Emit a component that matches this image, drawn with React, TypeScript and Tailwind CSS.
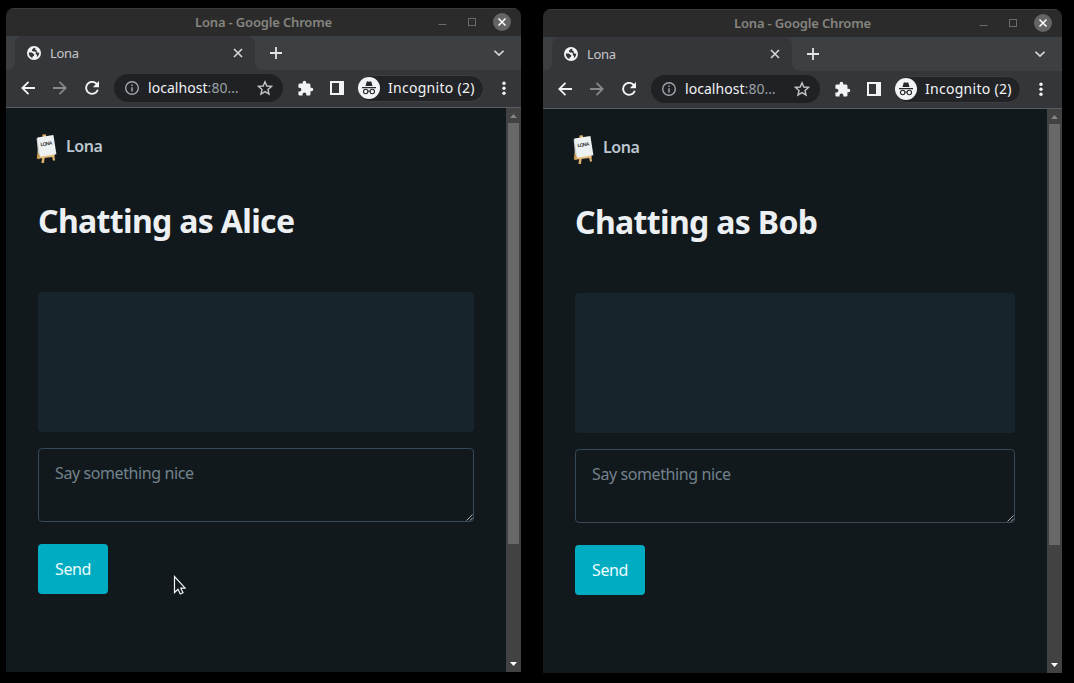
import React from "react";

function GlobeIcon() {
  return (
    <svg width="14" height="14" viewBox="0 0 14 14">
      <circle cx="7" cy="7" r="7" fill="#f1f3f4" />
      <path d="M8.6 1.9 L7.2 1.8 L5.2 3.2 L4.9 4.6 L6 5.6 L8 5.6 L8.9 6.6 L8.7 8 L10 8.9 L9.8 11.3 C11.4 10.3 12.3 8.7 12.200 6.6 L10.6 6.8 L9.600 5.6 L9.8 4.2 L8 3.6Z" fill="#35363a" />
      <path d="M1.8 6.4 L4.8 6.5 L6.4 7.8 L7.4 8.6 L6.8 10 L5.600 10.5 L5.4 12 C3.2 11.2 1.700 9.200 1.800 6.400Z" fill="#35363a" />
    </svg>
  );
}

function LogoIcon() {
  return (
    <svg width="22" height="30" viewBox="0 0 22 30">
      <path d="M3 5 L.8 24.5 L3.4 25.2 L6 20Z" fill="#c79a56" />
      <path d="M6.600 21 L5.400 29 L8 29 L9 21Z M15.500 20.500 L17 26.800 L19.200 26.200 L17.800 20Z" fill="#ddb06b" />
      <path d="M6.400 .6 L9.800 .2 L10.400 3 L6.600 3.400Z" fill="#ddb06b" />
      <path d="M3.600 21.800 L18.500 20 L18.700 22.800 L3.800 24.400Z" fill="#e3bb7d" />
      <path d="M.6 4.400 L3 3.400 L4.200 22 L2 18.500Z" fill="#c9cccc" />
      <path d="M1.400 3.400 L17.400 .9 L20.400 20.200 L4 22.800Z" fill="#eef1f1" />
      <text x="4.700" y="12.300" transform="rotate(-9 4.7 12.3)" textLength="12" fontSize="5" fontWeight="700" fontFamily="Liberation Sans, sans-serif" fill="#33383a">LONA</text>
    </svg>
  );
}

function TitleBar() {
  return (
    <div className="relative flex h-7 items-center justify-center border-t border-[#3a3a3a] bg-[#2b2b2b]">
      <span className="-mt-[2px] text-[13px] font-semibold leading-4 tracking-[-0.17px] text-[#86857f]">Lona - Google Chrome</span>
      <div className="absolute right-[10px] top-[4px] flex items-center gap-[17px]">
        <svg width="13" height="18" viewBox="0 0 13 18" className="mr-[3px]">
          <path d="M1.500 11.500 H9.500" stroke="#696969" />
        </svg>
        <svg width="9" height="18" viewBox="0 0 9 18" className="-ml-[3px]">
          <rect x="1.500" y="5.500" width="7" height="7" fill="none" stroke="#696969" />
        </svg>
        <svg width="18" height="18" viewBox="0 0 18 18">
          <circle cx="9" cy="9" r="9" fill="#656565" />
          <path d="M5.500 5.500 L12.500 12.500 M12.500 5.500 L5.500 12.500" stroke="#fff" strokeWidth="1.500" />
        </svg>
      </div>
    </div>
  );
}

function TabStrip() {
  return (
    <div className="flex h-[34px] items-end bg-[#3c4043]">
      <div className="h-full w-[9px] bg-[#35363a]">
        <div className="h-full rounded-br-lg bg-[#3c4043]" />
      </div>
      <div className="flex h-full w-60 items-center rounded-t-lg bg-[#35363a] pl-3">
        <GlobeIcon />
        <span className="ml-[9px] text-[13px] leading-4 tracking-[-0.3px] text-[#c5c8ca]">Lona</span>
        <svg width="10" height="10" viewBox="0 0 10 10" className="ml-auto mr-3">
          <path d="M1 1 L9 9 M9 1 L1 9" stroke="#d5d7d9" strokeWidth="1.600" />
        </svg>
      </div>
      <div className="h-full w-2 bg-[#35363a]">
        <div className="h-full rounded-bl-lg bg-[#3c4043]" />
      </div>
      <svg width="12" height="34" viewBox="0 0 12 34" className="ml-[7px]">
        <path d="M6 11 V23 M0 17 H12" stroke="#e3e5e7" strokeWidth="1.800" />
      </svg>
      <svg width="10" height="34" viewBox="0 0 10 34" className="ml-auto mr-[17px]">
        <path d="M.5 14.800 L5 19 L9.500 14.800" fill="none" stroke="#d5d7d9" strokeWidth="1.700" />
      </svg>
    </div>
  );
}

function Toolbar() {
  return (
    <div className="flex h-[38px] items-center border-b border-[#5a5d60] bg-[#35363a] pb-px">
      <svg width="14" height="14" viewBox="0 0 14 14" className="ml-[15px]" fill="none" stroke="#f1f3f4" strokeWidth="1.800">
        <path d="M14 7 H1.500 M7.500 .8 L1.300 7 L7.500 13.200" />
      </svg>
      <svg width="14" height="14" viewBox="0 0 14 14" className="ml-[18px]" fill="none" stroke="#85888b" strokeWidth="1.800">
        <path d="M0 7 H12.500 M6.500 .8 L12.700 7 L6.500 13.200" />
      </svg>
      <svg width="14" height="14" viewBox="0 0 14 14" className="ml-[18px]">
        <path d="M11.900 3.200 A6 6 0 1 0 12.800 8.800" fill="none" stroke="#f1f3f4" strokeWidth="1.900" />
        <path d="M14 0 V6.200 H7.800Z" fill="#f1f3f4" />
      </svg>
      <div className="ml-[15px] flex h-[28px] w-[169px] items-center rounded-full bg-[#202124] pl-[11px]">
        <svg width="14" height="14" viewBox="0 0 14 14">
          <circle cx="7" cy="7" r="6.300" fill="none" stroke="#a1a4a8" strokeWidth="1.400" />
          <path d="M7 6.200 V10.500 M7 3.500 V5" stroke="#a1a4a8" strokeWidth="1.500" />
        </svg>
        <span className="ml-[9px] w-[92px] whitespace-nowrap text-[14px] leading-5 tracking-[0.05px] text-[#9aa0a6]">
          <span className="text-[#f1f3f4]">localhost</span>:80…
        </span>
        <svg width="16" height="16" viewBox="0 0 16 16" className="ml-[17px]">
          <path d="M8 1.800 L9.800 6 L14.500 6.400 L11 9.500 L12 14 L8 11.600 L4 14 L5 9.500 L1.500 6.400 L6.200 6Z" fill="none" stroke="#c4c7ca" strokeWidth="1.400" />
        </svg>
      </div>
      <svg width="17" height="17" viewBox="0 0 24 24" className="ml-[14px]" fill="#f1f3f4">
        <path d="M20.500 11H19V7c0-1.100-.9-2-2-2h-4V3.500a2.500 2.500 0 0 0-5 0V5H4c-1.100 0-2 .9-2 2v3.800h1.500a2.700 2.700 0 0 1 0 5.400H2V20c0 1.100.9 2 2 2h3.800v-1.500a2.700 2.700 0 0 1 5.400 0V22H17c1.100 0 2-.9 2-2v-4h1.500a2.500 2.500 0 0 0 0-5z" />
      </svg>
      <svg width="14" height="14" viewBox="0 0 14 14" className="ml-[16px]">
        <path d="M0 0 H14 V14 H0Z M2 2 V12 H9 V2Z" fill="#f1f3f4" fillRule="evenodd" />
      </svg>
      <div className="ml-[13px] flex h-[27px] w-[127px] items-center rounded-full border border-[#3d3e41] bg-[#222326]">
        <svg width="22" height="22" viewBox="0 0 22 22" className="shrink-0">
          <circle cx="11" cy="11" r="11" fill="#f1f3f4" />
          <path d="M7.500 9 L8.600 5 Q8.900 4.100 9.800 4.400 L11 4.700 L12.200 4.400 Q13.100 4.100 13.400 5 L14.500 9Z M4 10.100 H18 V11.300 H4Z" fill="#26272a" />
          <circle cx="7.700" cy="14.500" r="2.200" fill="none" stroke="#26272a" strokeWidth="1.100" />
          <circle cx="14.300" cy="14.500" r="2.200" fill="none" stroke="#26272a" strokeWidth="1.100" />
          <path d="M9.900 14.300 Q11 13.500 12.100 14.300" fill="none" stroke="#26272a" />
        </svg>
        <span className="ml-2 whitespace-nowrap text-[14px] leading-5 tracking-[0.28px] text-[#f1f3f4]">Incognito (2)</span>
      </div>
      <svg width="4" height="14" viewBox="0 0 4 14" className="ml-[18px]" fill="#f1f3f4">
        <circle cx="2" cy="2.200" r="1.700" />
        <circle cx="2" cy="7.200" r="1.700" />
        <circle cx="2" cy="12.200" r="1.700" />
      </svg>
    </div>
  );
}

function Scrollbar() {
  return (
    <div className="flex w-[15px] shrink-0 flex-col items-center bg-[#424242]">
      <svg width="15" height="15" viewBox="0 0 15 15">
        <path d="M4 10 L7.500 6 L11 10Z" fill="#858585" />
      </svg>
      <div className="h-[421px] w-[11px] bg-[#686868]" />
      <svg width="15" height="15" viewBox="0 0 15 15" className="mt-auto">
        <path d="M4 5 H11 L7.500 9Z" fill="#fff" />
      </svg>
    </div>
  );
}

function BrowserWindow({ name, className }: { name: string; className: string }) {
  return (
    <section className={`flex h-[664px] shrink-0 flex-col overflow-hidden rounded-t-lg ${className}`}>
      <TitleBar />
      <TabStrip />
      <Toolbar />
      <div className="flex min-h-0 flex-1 bg-[#11191c]">
        <main className="flex-1 px-8 pt-[26px] text-base">
          <div className="-ml-[2px] flex h-[30px] items-center">
            <LogoIcon />
            <span className="-mt-[6px] ml-[8px] text-[16px] font-semibold leading-6 tracking-[-0.4px] text-[#bbc6ce]">Lona</span>
          </div>
          <h1 className="mt-[37px] h-10 whitespace-nowrap text-[32px] font-bold leading-10 tracking-[-0.66px] text-[#edf0f3]">
            Chatting as {name}
          </h1>
          <div className="mt-[51px] h-[140px] rounded bg-[#18242c]" />
          <div className="relative mt-4 h-[74px] rounded border border-[#374956] px-4 pt-3">
            <span className="text-base leading-6 tracking-[-0.4px] text-[#73828c]">Say something nice</span>
            <svg width="7" height="7" viewBox="0 0 7 7" className="absolute bottom-0 right-0">
              <path d="M.5 6.500 L6.500 .5 M4 6.500 L6.500 4" stroke="#c0c5c8" strokeWidth=".9" />
            </svg>
          </div>
          <button className="mt-[22px] flex h-[50px] w-[70px] items-center justify-center rounded bg-[#00acc1] text-base leading-6 tracking-[-0.4px] text-[#edfbfd]">
            Send
          </button>
        </main>
        <Scrollbar />
      </div>
    </section>
  );
}

export default function App() {
  return (
    <div className="relative flex h-[683px] w-[1074px] items-start gap-[22px] overflow-hidden bg-black pl-[6px] pt-2 font-['Noto_Sans',sans-serif]">
      <BrowserWindow name="Alice" className="w-[515px]" />
      <BrowserWindow name="Bob" className="mt-px w-[519px]" />
      <svg width="13" height="21" viewBox="0 0 13 21" className="absolute left-[173px] top-[575px]">
        <path d="M1.500 1.500 V17.500 L5 14.200 L7.300 19 L10 17.700 L7.800 13.200 H12.200Z" fill="#11191c" stroke="#f4f4f4" strokeWidth="1.200" />
      </svg>
    </div>
  );
}
